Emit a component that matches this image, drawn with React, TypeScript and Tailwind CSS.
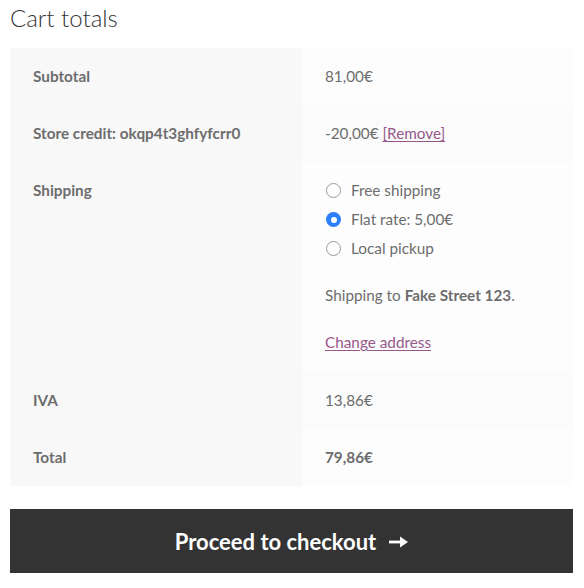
import React from "react";

const font = { fontFamily: '"Source Sans Pro", Lato, "Noto Sans", sans-serif' };

function Radio({ checked }: { checked?: boolean }) {
  return checked ? (
    <span className="inline-flex w-[15px] h-[15px] rounded-full bg-[#2d7ff9] items-center justify-center shrink-0">
      <span className="w-[6px] h-[6px] rounded-full bg-white" />
    </span>
  ) : (
    <span className="inline-block w-[15px] h-[15px] rounded-full border border-[#9a9a9a] bg-white shrink-0" />
  );
}

export default function App() {
  const th = "bg-[#f8f8f8] text-left align-top font-bold px-[23px] py-[16px] w-[292px]";
  return (
    <div className="bg-white w-[584px] h-[588px] px-[10px] text-[#6d6d6d] text-[15.3px] leading-[25px]" style={font}>
      <h2 className="text-[24px] leading-[32px] font-light text-[#333333] pt-[2px] mb-[14px]">Cart totals</h2>
      <table className="w-[563px] border-collapse">
        <tbody>
          <tr>
            <th className={th}>Subtotal</th>
            <td className="bg-[#fdfdfd] px-[23px] py-[16px]">81,00€</td>
          </tr>
          <tr>
            <th className={th}>Store credit: okqp4t3ghfyfcrr0</th>
            <td className="bg-[#fbfbfb] px-[23px] py-[16px]">
              -20,00€ <a className="text-[#96588a] underline underline-offset-2">[Remove]</a>
            </td>
          </tr>
          <tr>
            <th className={th}>Shipping</th>
            <td className="bg-[#fdfdfd] px-[23px] pt-[16px] pb-[17px] align-top">
              <ul className="mb-[22px] flex flex-col gap-[4px]">
                <li className="flex items-center gap-[10px] h-[25px] pl-[1px]">
                  <Radio /> <span>Free shipping</span>
                </li>
                <li className="flex items-center gap-[10px] h-[25px] pl-[1px]">
                  <Radio checked /> <span>Flat rate: 5,00€</span>
                </li>
                <li className="flex items-center gap-[10px] h-[25px] pl-[1px]">
                  <Radio /> <span>Local pickup</span>
                </li>
              </ul>
              <p className="mb-[22px]">
                Shipping to <strong className="font-bold">Fake Street 123</strong>.
              </p>
              <a className="text-[#96588a] underline underline-offset-2">Change address</a>
            </td>
          </tr>
          <tr>
            <th className={th}>IVA</th>
            <td className="bg-[#fbfbfb] px-[23px] py-[16px]">13,86€</td>
          </tr>
          <tr>
            <th className={th}>Total</th>
            <td className="bg-[#fdfdfd] px-[23px] py-[16px] font-bold">79,86€</td>
          </tr>
        </tbody>
      </table>
      <button className="mt-[23px] w-[563px] h-[64px] bg-[#333333] text-white text-[22px] font-bold flex items-center justify-center gap-[13px]">
        <span>Proceed to checkout</span>
        <svg width="19" height="12" viewBox="0 0 19 12" className="mt-[1px]">
          <rect x="0" y="4.6" width="13" height="2.8" fill="white" />
          <path d="M11 0.5 L19 6 L11 11.5 Z" fill="white" />
        </svg>
      </button>
    </div>
  );
}
